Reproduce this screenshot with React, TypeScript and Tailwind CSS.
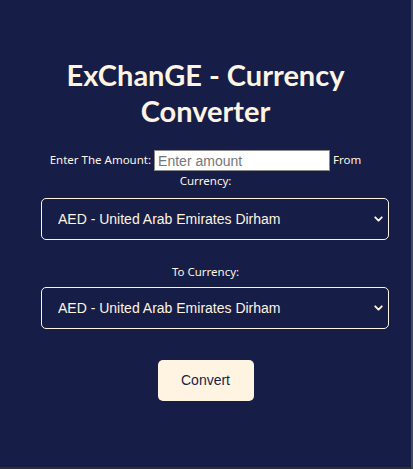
import React, { useState } from 'react';
import { ChevronDown } from 'lucide-react';

const currencies = [
  'AED - United Arab Emirates Dirham',
  'USD - United States Dollar',
  'EUR - Euro',
  'GBP - British Pound',
];

const CurrencySelect = ({ value, onChange }: { value: string; onChange: (v: string) => void }) => (
  <div className="relative ml-[41px] w-[348px]">
    <select
      value={value}
      onChange={(e) => onChange(e.target.value)}
      className="block h-[42px] w-full appearance-none rounded-[5px] border border-[#fff4e1] bg-[#161e48] pl-[16px] pr-8 font-['Liberation_Sans',Arial,sans-serif] text-[14px] text-[#fff4e1] outline-none"
    >
      {currencies.map((c) => (
        <option key={c} value={c}>
          {c}
        </option>
      ))}
    </select>
    <ChevronDown
      className="pointer-events-none absolute right-[4px] top-1/2 h-[13px] w-[13px] -translate-y-1/2 text-[#fff4e1]"
      strokeWidth={3.5}
    />
  </div>
);

export default function App() {
  const [amount, setAmount] = useState('');
  const [from, setFrom] = useState(currencies[0]);
  const [to, setTo] = useState(currencies[0]);

  return (
    <div className="min-h-[469px] border-b-2 border-r-2 border-b-[#2e2f33] border-r-[#444a58] bg-[#161e48] pt-[57px] text-[#fff4e1]">
      <h1 className="text-center font-['Lato',sans-serif] text-[29px] font-bold leading-[36px]">
        ExChanGE - Currency
        <br />
        Converter
      </h1>

      <p className="mt-[21px] text-center font-['Noto_Sans',sans-serif] text-[11.5px] leading-[20px]">
        Enter The Amount:{' '}
        <input
          type="text"
          value={amount}
          onChange={(e) => setAmount(e.target.value)}
          placeholder="Enter amount"
          className="inline-block h-[21px] w-[176px] border border-[#8a8a8a] bg-white px-[3px] align-middle font-['Liberation_Sans',Arial,sans-serif] text-[14px] text-black placeholder:text-[#767676] outline-none"
        />{' '}
        From
        <br />
        Currency:
      </p>

      <div className="mt-[7px]">
        <CurrencySelect value={from} onChange={setFrom} />
      </div>

      <p className="mt-[22px] text-center font-['Noto_Sans',sans-serif] text-[11.5px] leading-[20px]">
        To Currency:
      </p>

      <div className="mt-[5px]">
        <CurrencySelect value={to} onChange={setTo} />
      </div>

      <div className="mt-[31px] flex justify-center">
        <button className="h-[41px] w-[96px] rounded-[5px] bg-[#fff4e2] font-['Liberation_Sans',Arial,sans-serif] text-[14px] text-[#161e48]">
          Convert
        </button>
      </div>
    </div>
  );
}
